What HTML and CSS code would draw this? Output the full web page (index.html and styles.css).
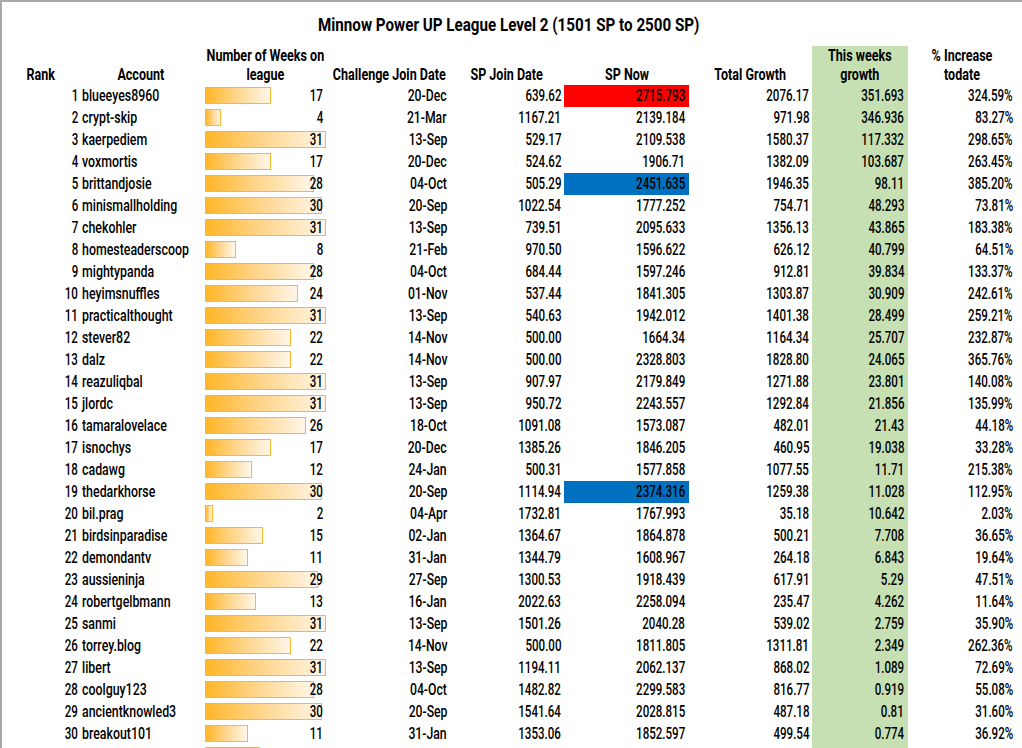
FILE: index.html
```html
<!DOCTYPE html>
<html>
<head>
<meta charset="utf-8">
<link rel="stylesheet" href="styles.css">
</head>
<body>
<div class="frame">
  <div class="title"><span class="t">Minnow Power UP League Level 2 (1501 SP to 2500 SP)</span></div>
  <div class="row head">
    <div class="c"><span class="t">Rank</span></div>
    <div class="c"><span class="t">Account</span></div>
    <div class="c"><span class="t">Number of Weeks on<br>league</span></div>
    <div class="c"><span class="t">Challenge Join Date</span></div>
    <div class="c"><span class="t">SP Join Date</span></div>
    <div class="c"><span class="t">SP Now</span></div>
    <div class="c"><span class="t">Total Growth</span></div>
    <div class="c green"><span class="t">This weeks<br>growth</span></div>
    <div class="c"><span class="t">% Increase<br>todate</span></div>
  </div>
  <div class="row"><div class="rank"><span class="t">1</span></div><div class="acct"><span class="t">blueeyes8960</span></div><div class="weeks"><span class="bar" style="width:66px"></span><span class="wn t">17</span></div><div class="num date"><span class="t">20-Dec</span></div><div class="num"><span class="t">639.62</span></div><div class="num now red"><span class="t">2715.793</span></div><div class="num"><span class="t">2076.17</span></div><div class="num green"><span class="t">351.693</span></div><div class="num"><span class="t">324.59%</span></div></div>
  <div class="row"><div class="rank"><span class="t">2</span></div><div class="acct"><span class="t">crypt-skip</span></div><div class="weeks"><span class="bar" style="width:15.6px"></span><span class="wn t">4</span></div><div class="num date"><span class="t">21-Mar</span></div><div class="num"><span class="t">1167.21</span></div><div class="num now"><span class="t">2139.184</span></div><div class="num"><span class="t">971.98</span></div><div class="num green"><span class="t">346.936</span></div><div class="num"><span class="t">83.27%</span></div></div>
  <div class="row"><div class="rank"><span class="t">3</span></div><div class="acct"><span class="t">kaerpediem</span></div><div class="weeks"><span class="bar" style="width:120.6px"></span><span class="wn t">31</span></div><div class="num date"><span class="t">13-Sep</span></div><div class="num"><span class="t">529.17</span></div><div class="num now"><span class="t">2109.538</span></div><div class="num"><span class="t">1580.37</span></div><div class="num green"><span class="t">117.332</span></div><div class="num"><span class="t">298.65%</span></div></div>
  <div class="row"><div class="rank"><span class="t">4</span></div><div class="acct"><span class="t">voxmortis</span></div><div class="weeks"><span class="bar" style="width:66px"></span><span class="wn t">17</span></div><div class="num date"><span class="t">20-Dec</span></div><div class="num"><span class="t">524.62</span></div><div class="num now"><span class="t">1906.71</span></div><div class="num"><span class="t">1382.09</span></div><div class="num green"><span class="t">103.687</span></div><div class="num"><span class="t">263.45%</span></div></div>
  <div class="row"><div class="rank"><span class="t">5</span></div><div class="acct"><span class="t">brittandjosie</span></div><div class="weeks"><span class="bar" style="width:108.9px"></span><span class="wn t">28</span></div><div class="num date"><span class="t">04-Oct</span></div><div class="num"><span class="t">505.29</span></div><div class="num now blue"><span class="t">2451.635</span></div><div class="num"><span class="t">1946.35</span></div><div class="num green"><span class="t">98.11</span></div><div class="num"><span class="t">385.20%</span></div></div>
  <div class="row"><div class="rank"><span class="t">6</span></div><div class="acct"><span class="t">minismallholding</span></div><div class="weeks"><span class="bar" style="width:116.7px"></span><span class="wn t">30</span></div><div class="num date"><span class="t">20-Sep</span></div><div class="num"><span class="t">1022.54</span></div><div class="num now"><span class="t">1777.252</span></div><div class="num"><span class="t">754.71</span></div><div class="num green"><span class="t">48.293</span></div><div class="num"><span class="t">73.81%</span></div></div>
  <div class="row"><div class="rank"><span class="t">7</span></div><div class="acct"><span class="t">chekohler</span></div><div class="weeks"><span class="bar" style="width:120.6px"></span><span class="wn t">31</span></div><div class="num date"><span class="t">13-Sep</span></div><div class="num"><span class="t">739.51</span></div><div class="num now"><span class="t">2095.633</span></div><div class="num"><span class="t">1356.13</span></div><div class="num green"><span class="t">43.865</span></div><div class="num"><span class="t">183.38%</span></div></div>
  <div class="row"><div class="rank"><span class="t">8</span></div><div class="acct"><span class="t">homesteaderscoop</span></div><div class="weeks"><span class="bar" style="width:31.1px"></span><span class="wn t">8</span></div><div class="num date"><span class="t">21-Feb</span></div><div class="num"><span class="t">970.50</span></div><div class="num now"><span class="t">1596.622</span></div><div class="num"><span class="t">626.12</span></div><div class="num green"><span class="t">40.799</span></div><div class="num"><span class="t">64.51%</span></div></div>
  <div class="row"><div class="rank"><span class="t">9</span></div><div class="acct"><span class="t">mightypanda</span></div><div class="weeks"><span class="bar" style="width:108.9px"></span><span class="wn t">28</span></div><div class="num date"><span class="t">04-Oct</span></div><div class="num"><span class="t">684.44</span></div><div class="num now"><span class="t">1597.246</span></div><div class="num"><span class="t">912.81</span></div><div class="num green"><span class="t">39.834</span></div><div class="num"><span class="t">133.37%</span></div></div>
  <div class="row"><div class="rank"><span class="t">10</span></div><div class="acct"><span class="t">heyimsnuffles</span></div><div class="weeks"><span class="bar" style="width:93.4px"></span><span class="wn t">24</span></div><div class="num date"><span class="t">01-Nov</span></div><div class="num"><span class="t">537.44</span></div><div class="num now"><span class="t">1841.305</span></div><div class="num"><span class="t">1303.87</span></div><div class="num green"><span class="t">30.909</span></div><div class="num"><span class="t">242.61%</span></div></div>
  <div class="row sel"><div class="rank"><span class="t">11</span></div><div class="acct"><span class="t">practicalthought</span></div><div class="weeks"><span class="bar" style="width:120.6px"></span><span class="wn t">31</span></div><div class="num date"><span class="t">13-Sep</span></div><div class="num"><span class="t">540.63</span></div><div class="num now"><span class="t">1942.012</span></div><div class="num"><span class="t">1401.38</span></div><div class="num green"><span class="t">28.499</span></div><div class="num"><span class="t">259.21%</span></div></div>
  <div class="row"><div class="rank"><span class="t">12</span></div><div class="acct"><span class="t">stever82</span></div><div class="weeks"><span class="bar" style="width:85.6px"></span><span class="wn t">22</span></div><div class="num date"><span class="t">14-Nov</span></div><div class="num"><span class="t">500.00</span></div><div class="num now"><span class="t">1664.34</span></div><div class="num"><span class="t">1164.34</span></div><div class="num green"><span class="t">25.707</span></div><div class="num"><span class="t">232.87%</span></div></div>
  <div class="row"><div class="rank"><span class="t">13</span></div><div class="acct"><span class="t">dalz</span></div><div class="weeks"><span class="bar" style="width:85.6px"></span><span class="wn t">22</span></div><div class="num date"><span class="t">14-Nov</span></div><div class="num"><span class="t">500.00</span></div><div class="num now"><span class="t">2328.803</span></div><div class="num"><span class="t">1828.80</span></div><div class="num green"><span class="t">24.065</span></div><div class="num"><span class="t">365.76%</span></div></div>
  <div class="row"><div class="rank"><span class="t">14</span></div><div class="acct"><span class="t">reazuliqbal</span></div><div class="weeks"><span class="bar" style="width:120.6px"></span><span class="wn t">31</span></div><div class="num date"><span class="t">13-Sep</span></div><div class="num"><span class="t">907.97</span></div><div class="num now"><span class="t">2179.849</span></div><div class="num"><span class="t">1271.88</span></div><div class="num green"><span class="t">23.801</span></div><div class="num"><span class="t">140.08%</span></div></div>
  <div class="row"><div class="rank"><span class="t">15</span></div><div class="acct"><span class="t">jlordc</span></div><div class="weeks"><span class="bar" style="width:120.6px"></span><span class="wn t">31</span></div><div class="num date"><span class="t">13-Sep</span></div><div class="num"><span class="t">950.72</span></div><div class="num now"><span class="t">2243.557</span></div><div class="num"><span class="t">1292.84</span></div><div class="num green"><span class="t">21.856</span></div><div class="num"><span class="t">135.99%</span></div></div>
  <div class="row"><div class="rank"><span class="t">16</span></div><div class="acct"><span class="t">tamaralovelace</span></div><div class="weeks"><span class="bar" style="width:101.1px"></span><span class="wn t">26</span></div><div class="num date"><span class="t">18-Oct</span></div><div class="num"><span class="t">1091.08</span></div><div class="num now"><span class="t">1573.087</span></div><div class="num"><span class="t">482.01</span></div><div class="num green"><span class="t">21.43</span></div><div class="num"><span class="t">44.18%</span></div></div>
  <div class="row"><div class="rank"><span class="t">17</span></div><div class="acct"><span class="t">isnochys</span></div><div class="weeks"><span class="bar" style="width:66px"></span><span class="wn t">17</span></div><div class="num date"><span class="t">20-Dec</span></div><div class="num"><span class="t">1385.26</span></div><div class="num now"><span class="t">1846.205</span></div><div class="num"><span class="t">460.95</span></div><div class="num green"><span class="t">19.038</span></div><div class="num"><span class="t">33.28%</span></div></div>
  <div class="row"><div class="rank"><span class="t">18</span></div><div class="acct"><span class="t">cadawg</span></div><div class="weeks"><span class="bar" style="width:46.7px"></span><span class="wn t">12</span></div><div class="num date"><span class="t">24-Jan</span></div><div class="num"><span class="t">500.31</span></div><div class="num now"><span class="t">1577.858</span></div><div class="num"><span class="t">1077.55</span></div><div class="num green"><span class="t">11.71</span></div><div class="num"><span class="t">215.38%</span></div></div>
  <div class="row"><div class="rank"><span class="t">19</span></div><div class="acct"><span class="t">thedarkhorse</span></div><div class="weeks"><span class="bar" style="width:116.7px"></span><span class="wn t">30</span></div><div class="num date"><span class="t">20-Sep</span></div><div class="num"><span class="t">1114.94</span></div><div class="num now blue"><span class="t">2374.316</span></div><div class="num"><span class="t">1259.38</span></div><div class="num green"><span class="t">11.028</span></div><div class="num"><span class="t">112.95%</span></div></div>
  <div class="row"><div class="rank"><span class="t">20</span></div><div class="acct"><span class="t">bil.prag</span></div><div class="weeks"><span class="bar" style="width:7.8px"></span><span class="wn t">2</span></div><div class="num date"><span class="t">04-Apr</span></div><div class="num"><span class="t">1732.81</span></div><div class="num now"><span class="t">1767.993</span></div><div class="num"><span class="t">35.18</span></div><div class="num green"><span class="t">10.642</span></div><div class="num"><span class="t">2.03%</span></div></div>
  <div class="row"><div class="rank"><span class="t">21</span></div><div class="acct"><span class="t">birdsinparadise</span></div><div class="weeks"><span class="bar" style="width:58.4px"></span><span class="wn t">15</span></div><div class="num date"><span class="t">02-Jan</span></div><div class="num"><span class="t">1364.67</span></div><div class="num now"><span class="t">1864.878</span></div><div class="num"><span class="t">500.21</span></div><div class="num green"><span class="t">7.708</span></div><div class="num"><span class="t">36.65%</span></div></div>
  <div class="row"><div class="rank"><span class="t">22</span></div><div class="acct"><span class="t">demondantv</span></div><div class="weeks"><span class="bar" style="width:42.8px"></span><span class="wn t">11</span></div><div class="num date"><span class="t">31-Jan</span></div><div class="num"><span class="t">1344.79</span></div><div class="num now"><span class="t">1608.967</span></div><div class="num"><span class="t">264.18</span></div><div class="num green"><span class="t">6.843</span></div><div class="num"><span class="t">19.64%</span></div></div>
  <div class="row"><div class="rank"><span class="t">23</span></div><div class="acct"><span class="t">aussieninja</span></div><div class="weeks"><span class="bar" style="width:112.8px"></span><span class="wn t">29</span></div><div class="num date"><span class="t">27-Sep</span></div><div class="num"><span class="t">1300.53</span></div><div class="num now"><span class="t">1918.439</span></div><div class="num"><span class="t">617.91</span></div><div class="num green"><span class="t">5.29</span></div><div class="num"><span class="t">47.51%</span></div></div>
  <div class="row"><div class="rank"><span class="t">24</span></div><div class="acct"><span class="t">robertgelbmann</span></div><div class="weeks"><span class="bar" style="width:50.6px"></span><span class="wn t">13</span></div><div class="num date"><span class="t">16-Jan</span></div><div class="num"><span class="t">2022.63</span></div><div class="num now"><span class="t">2258.094</span></div><div class="num"><span class="t">235.47</span></div><div class="num green"><span class="t">4.262</span></div><div class="num"><span class="t">11.64%</span></div></div>
  <div class="row"><div class="rank"><span class="t">25</span></div><div class="acct"><span class="t">sanmi</span></div><div class="weeks"><span class="bar" style="width:120.6px"></span><span class="wn t">31</span></div><div class="num date"><span class="t">13-Sep</span></div><div class="num"><span class="t">1501.26</span></div><div class="num now"><span class="t">2040.28</span></div><div class="num"><span class="t">539.02</span></div><div class="num green"><span class="t">2.759</span></div><div class="num"><span class="t">35.90%</span></div></div>
  <div class="row"><div class="rank"><span class="t">26</span></div><div class="acct"><span class="t">torrey.blog</span></div><div class="weeks"><span class="bar" style="width:85.6px"></span><span class="wn t">22</span></div><div class="num date"><span class="t">14-Nov</span></div><div class="num"><span class="t">500.00</span></div><div class="num now"><span class="t">1811.805</span></div><div class="num"><span class="t">1311.81</span></div><div class="num green"><span class="t">2.349</span></div><div class="num"><span class="t">262.36%</span></div></div>
  <div class="row"><div class="rank"><span class="t">27</span></div><div class="acct"><span class="t">libert</span></div><div class="weeks"><span class="bar" style="width:120.6px"></span><span class="wn t">31</span></div><div class="num date"><span class="t">13-Sep</span></div><div class="num"><span class="t">1194.11</span></div><div class="num now"><span class="t">2062.137</span></div><div class="num"><span class="t">868.02</span></div><div class="num green"><span class="t">1.089</span></div><div class="num"><span class="t">72.69%</span></div></div>
  <div class="row"><div class="rank"><span class="t">28</span></div><div class="acct"><span class="t">coolguy123</span></div><div class="weeks"><span class="bar" style="width:108.9px"></span><span class="wn t">28</span></div><div class="num date"><span class="t">04-Oct</span></div><div class="num"><span class="t">1482.82</span></div><div class="num now"><span class="t">2299.583</span></div><div class="num"><span class="t">816.77</span></div><div class="num green"><span class="t">0.919</span></div><div class="num"><span class="t">55.08%</span></div></div>
  <div class="row"><div class="rank"><span class="t">29</span></div><div class="acct"><span class="t">ancientknowled3</span></div><div class="weeks"><span class="bar" style="width:116.7px"></span><span class="wn t">30</span></div><div class="num date"><span class="t">20-Sep</span></div><div class="num"><span class="t">1541.64</span></div><div class="num now"><span class="t">2028.815</span></div><div class="num"><span class="t">487.18</span></div><div class="num green"><span class="t">0.81</span></div><div class="num"><span class="t">31.60%</span></div></div>
  <div class="row"><div class="rank"><span class="t">30</span></div><div class="acct"><span class="t">breakout101</span></div><div class="weeks"><span class="bar" style="width:42.8px"></span><span class="wn t">11</span></div><div class="num date"><span class="t">31-Jan</span></div><div class="num"><span class="t">1353.06</span></div><div class="num now"><span class="t">1852.597</span></div><div class="num"><span class="t">499.54</span></div><div class="num green"><span class="t">0.774</span></div><div class="num"><span class="t">36.92%</span></div></div>
  <div class="row"><div class="rank"></div><div class="acct"></div><div class="weeks"><span class="bar" style="width:54.5px"></span></div><div class="num"></div><div class="num"></div><div class="num now"></div><div class="num"></div><div class="num green"></div><div class="num"></div></div>
</div>
</body>
</html>
```

FILE: styles.css
```css
html, body {
  margin: 0;
  padding: 0;
  background: #fff;
  height: 748px;
  overflow: hidden;
}

body {
  font-family: Roboto, "Noto Sans", sans-serif;
  color: #000;
}

.frame {
  border-left: 2px solid #a8a8a8;
  width: 1020px;
  height: 748px;
  overflow: hidden;
}

/* condensed look: text squeezed horizontally */
.t {
  display: inline-block;
  transform: scaleX(0.7);
  transform-origin: 100% 50%;
  white-space: nowrap;
}

.title {
  width: 1020px;
  height: 46px;
  box-sizing: border-box;
  border-top: 2px solid #a8a8a8;
  padding-top: 13px;
  padding-right: 6px;
  text-align: center;
  font-weight: bold;
  font-size: 18.3px;
  line-height: 20px;
  white-space: nowrap;
}

.title .t {
  transform: scaleX(0.83);
  transform-origin: 50% 50%;
}

.row {
  position: relative;
  display: grid;
  grid-template-columns: 78px 122px 126px 122px 114px 125px 123px 96px 108px;
  height: 22px;
  font-size: 16.5px;
  font-weight: 500;
  line-height: 22px;
}

.row.head {
  height: 39px;
  font-size: 16.5px;
  font-weight: bold;
  line-height: 19px;
}

.head .c {
  display: flex;
  align-items: flex-end;
  justify-content: center;
  text-align: center;
  white-space: nowrap;
  padding-bottom: 1px;
}

.head .t {
  transform: scaleX(0.76);
  transform-origin: 50% 50%;
}

.row.sel::before {
  content: "";
  position: absolute;
  left: -2px;
  top: 0;
  width: 2px;
  height: 22px;
  background: #217346;
}

.rank {
  text-align: right;
  padding-right: 2px;
  white-space: nowrap;
}

.acct {
  text-align: left;
  padding-left: 2px;
  white-space: nowrap;
}

.acct .t {
  transform: scaleX(0.75);
  transform-origin: 0 50%;
}

.weeks {
  display: grid;
  grid-template-columns: 1fr;
  grid-template-rows: 22px;
  padding-left: 3px;
}

.bar {
  grid-area: 1 / 1;
  justify-self: start;
  align-self: start;
  margin-top: 2px;
  height: 17px;
  box-sizing: border-box;
  border: 1px solid #ffb628;
  background: linear-gradient(to right, #ffb628 0%, #ffd487 45%, #fff6e9 100%);
}

.wn {
  grid-area: 1 / 1;
  justify-self: end;
  margin-right: 5px;
  position: relative;
}

.num {
  text-align: right;
  padding-right: 3px;
  white-space: nowrap;
}

.date .t {
  transform: scaleX(0.74);
}

.now {
  padding-right: 4px;
}

.green {
  background: #c6e0b4;
}

.num.green {
  padding-right: 4px;
}

.red {
  background: #ff0000;
}

.blue {
  background: #0070c0;
}
```
